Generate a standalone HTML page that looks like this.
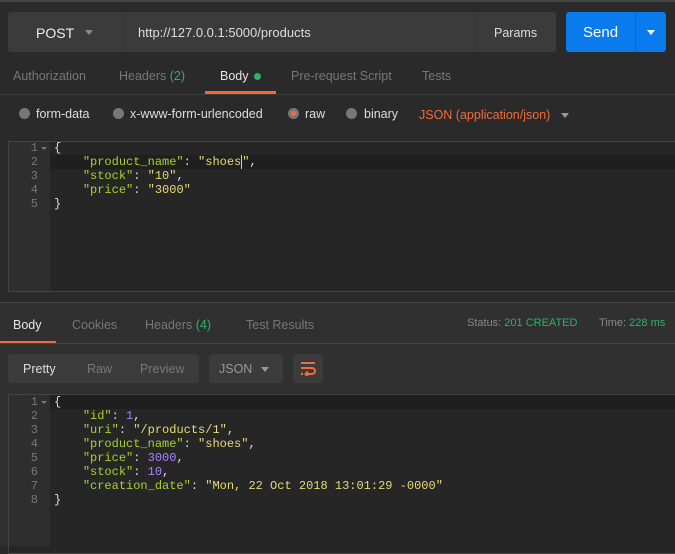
<!DOCTYPE html>
<html><head><style>
*{margin:0;padding:0;box-sizing:border-box}
body{width:675px;height:546px;overflow:hidden;background:#2a2a2a;font-family:"Liberation Sans",sans-serif;font-size:12px;color:#ccc;position:relative}
.a{position:absolute}
.code{font-family:"Liberation Mono",monospace;font-size:12px;line-height:14px}
.k{color:#a6d22e}.s{color:#e6db74}.n{color:#ae81ff}.p{color:#ddd}
.ln{color:#777;text-align:right;width:30px}
.tab{position:absolute;font-size:12.5px;color:#777}
</style></head><body>
<div class="a" style="left:0;top:0;width:675px;height:2px;background:#444"></div>
<div class="a" style="left:8px;top:12px;width:548px;height:40px;background:#3b3b3b;border-radius:3px"></div>
<div class="a" style="left:124px;top:12px;width:1px;height:40px;background:#333"></div>
<div class="a" style="left:475px;top:12px;width:1px;height:40px;background:#333"></div>
<div class="a" style="left:36px;top:25px;font-size:14px;color:#eee">POST</div>
<div class="a" style="left:85px;top:30px;border-left:4px solid transparent;border-right:4px solid transparent;border-top:5px solid #888"></div>
<div class="a" style="left:138px;top:25px;font-size:13px;color:#ddd">http://127.0.0.1:5000/products</div>
<div class="a" style="left:494px;top:26px;font-size:12.5px;color:#ddd">Params</div>
<div class="a" style="left:566px;top:12px;width:100px;height:40px;background:#097bed;border-radius:3px"></div>
<div class="a" style="left:635px;top:12px;width:1px;height:40px;background:#0a67c4"></div>
<div class="a" style="left:583px;top:24px;font-size:15px;color:#fff">Send</div>
<div class="a" style="left:647px;top:30px;border-left:4px solid transparent;border-right:4px solid transparent;border-top:5px solid #fff"></div>

<div class="tab" style="left:13px;top:69px">Authorization</div>
<div class="tab" style="left:119px;top:69px">Headers <span style="color:#2bb36b">(2)</span></div>
<div class="tab" style="left:220px;top:69px;color:#e6e6e6">Body</div>
<div class="a" style="left:254px;top:73px;width:7px;height:7px;border-radius:50%;background:#2bb36b"></div>
<div class="tab" style="left:291px;top:69px">Pre-request Script</div>
<div class="tab" style="left:422px;top:69px">Tests</div>
<div class="a" style="left:205px;top:91px;width:71px;height:3px;background:#f26b3a"></div>
<div class="a" style="left:0;top:94px;width:675px;height:1px;background:#3d3d3d"></div>

<div class="a" style="left:19px;top:108px;width:11px;height:11px;border-radius:50%;background:#777"></div>
<div class="a" style="left:36px;top:107px;font-size:12.5px;color:#ddd">form-data</div>
<div class="a" style="left:113px;top:108px;width:11px;height:11px;border-radius:50%;background:#777"></div>
<div class="a" style="left:130px;top:107px;font-size:12.5px;color:#ddd">x-www-form-urlencoded</div>
<div class="a" style="left:288px;top:108px;width:11px;height:11px;border-radius:50%;background:#777"></div>
<div class="a" style="left:291px;top:111px;width:5px;height:5px;border-radius:50%;background:#f26b3a"></div>
<div class="a" style="left:305px;top:107px;font-size:12.5px;color:#ddd">raw</div>
<div class="a" style="left:346px;top:108px;width:11px;height:11px;border-radius:50%;background:#777"></div>
<div class="a" style="left:364px;top:107px;font-size:12.5px;color:#ddd">binary</div>
<div class="a" style="left:419px;top:108px;font-size:12.5px;color:#f26b3a">JSON (application/json)</div>
<div class="a" style="left:561px;top:113px;border-left:4px solid transparent;border-right:4px solid transparent;border-top:5px solid #999"></div>

<div class="a" style="left:8px;top:141px;width:670px;height:151px;background:#262626;border:1px solid #444;border-right:none"></div>
<div class="a" style="left:9px;top:142px;width:41px;height:149px;background:#2e2e2e"></div>
<div class="a" style="left:50px;top:155px;width:625px;height:14px;background:#1f1f1f"></div>
<div class="a code ln" style="left:8px;top:141px">1<br>2<br>3<br>4<br>5</div>
<div class="a" style="left:41px;top:147px;border-left:3px solid transparent;border-right:3px solid transparent;border-top:3px solid #777"></div>
<pre class="a code p" style="left:54px;top:141px">{
    <span class="k">"product_name"</span>: <span class="s">"shoes</span><span style="border-left:1px solid #ccc"></span><span class="s">"</span>,
    <span class="k">"stock"</span>: <span class="s">"10"</span>,
    <span class="k">"price"</span>: <span class="s">"3000"</span>
}</pre>

<div class="a" style="left:0;top:302px;width:675px;height:244px;background:#303030;border-top:1px solid #444"></div>
<div class="tab" style="left:13px;top:318px;color:#e6e6e6">Body</div>
<div class="tab" style="left:72px;top:318px">Cookies</div>
<div class="tab" style="left:145px;top:318px">Headers <span style="color:#2bb36b">(4)</span></div>
<div class="tab" style="left:246px;top:318px">Test Results</div>
<div class="a" style="left:467px;top:317px;font-size:11px;color:#888">Status: <span style="color:#2bb36b">201 CREATED</span></div>
<div class="a" style="left:599px;top:317px;font-size:11px;color:#888">Time: <span style="color:#2bb36b">228 ms</span></div>
<div class="a" style="left:0;top:341px;width:56px;height:3px;background:#f26b3a"></div>
<div class="a" style="left:0;top:343px;width:675px;height:1px;background:#444"></div>

<div class="a" style="left:8px;top:354px;width:191px;height:29px;background:#3b3b3b;border-radius:3px"></div>
<div class="a" style="left:23px;top:362px;font-size:12.5px;color:#ddd">Pretty</div>
<div class="a" style="left:87px;top:362px;font-size:12.5px;color:#777">Raw</div>
<div class="a" style="left:140px;top:362px;font-size:12.5px;color:#777">Preview</div>
<div class="a" style="left:209px;top:354px;width:74px;height:29px;background:#3b3b3b;border-radius:3px"></div>
<div class="a" style="left:219px;top:362px;font-size:12.5px;color:#999">JSON</div>
<div class="a" style="left:261px;top:367px;border-left:4px solid transparent;border-right:4px solid transparent;border-top:5px solid #999"></div>
<div class="a" style="left:293px;top:354px;width:30px;height:29px;background:#3b3b3b;border-radius:3px"></div>
<svg class="a" style="left:299px;top:361px" width="18" height="15" viewBox="0 0 18 15"><path d="M2 2H16M2 7H13a3 3 0 0 1 0 6H7M2 13H4M9 10.5L6.5 13L9 15.5" fill="none" stroke="#f26b3a" stroke-width="2"/></svg>

<div class="a" style="left:8px;top:394px;width:670px;height:160px;background:#262626;border:1px solid #444;border-right:none"></div>
<div class="a" style="left:9px;top:395px;width:41px;height:151px;background:#2e2e2e"></div>
<div class="a" style="left:50px;top:395px;width:625px;height:14px;background:#1f1f1f"></div>
<div class="a code ln" style="left:8px;top:395px">1<br>2<br>3<br>4<br>5<br>6<br>7<br>8</div>
<div class="a" style="left:41px;top:401px;border-left:3px solid transparent;border-right:3px solid transparent;border-top:3px solid #777"></div>
<pre class="a code p" style="left:54px;top:395px">{
    <span class="k">"id"</span>: <span class="n">1</span>,
    <span class="k">"uri"</span>: <span class="s">"/products/1"</span>,
    <span class="k">"product_name"</span>: <span class="s">"shoes"</span>,
    <span class="k">"price"</span>: <span class="n">3000</span>,
    <span class="k">"stock"</span>: <span class="n">10</span>,
    <span class="k">"creation_date"</span>: <span class="s">"Mon, 22 Oct 2018 13:01:29 -0000"</span>
}</pre>
</body></html>
